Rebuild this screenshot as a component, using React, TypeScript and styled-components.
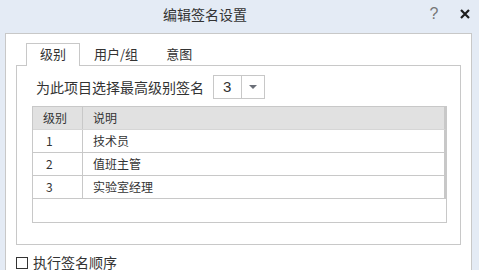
import styled, {createGlobalStyle} from "styled-components";

const GlobalStyle = createGlobalStyle`
    html, body {
        margin: 0;
        padding: 0;
        background: #e4ebf5;
    }
    body {
        font-family: "Noto Sans CJK SC", "Noto Sans", sans-serif;
        color: #333;
    }
`

type Row = {
    level: string
    desc: string
}

const rows: Row[] = [
    {level: "1", desc: "技术员"},
    {level: "2", desc: "值班主管"},
    {level: "3", desc: "实验室经理"},
]

const tabs = ["级别", "用户/组", "意图"]

export default function App() {
    return (
        <>
            <GlobalStyle/>
            <Window>
                <TitleBar>
                    <Title>编辑签名设置</Title>
                    <HelpButton>?</HelpButton>
                    <CloseButton>
                        <svg width="10" height="10" viewBox="0 0 10 10">
                            <path d="M1 1 L9 9 M9 1 L1 9" stroke="#1e1e1e" strokeWidth="2.2"/>
                        </svg>
                    </CloseButton>
                </TitleBar>
                <Body>
                    <TabBar>
                        {tabs.map((t, i) => (
                            <Tab key={t} $active={i === 0}>{t}</Tab>
                        ))}
                    </TabBar>
                    <TabPanel>
                        <LevelLine>
                            <Label>为此项目选择最高级别签名</Label>
                            <Combo>
                                <ComboValue>3</ComboValue>
                                <ComboArrow><Triangle/></ComboArrow>
                            </Combo>
                        </LevelLine>
                        <Table>
                            <HeaderRow>
                                <LevelCell $pad={10}>级别</LevelCell>
                                <DescCell>说明</DescCell>
                            </HeaderRow>
                            {rows.map(r => (
                                <DataRow key={r.level}>
                                    <LevelCell $pad={13}>{r.level}</LevelCell>
                                    <DescCell>{r.desc}</DescCell>
                                </DataRow>
                            ))}
                            <EmptyArea/>
                        </Table>
                    </TabPanel>
                    <CheckLine>
                        <CheckBox/>
                        <CheckText>执行签名顺序</CheckText>
                    </CheckLine>
                </Body>
            </Window>
        </>
    );
}

const Window = styled.div`
    width: 479px;
    height: 270px;
    overflow: hidden;
    background: #e4ebf5;
    display: flex;
    flex-direction: column;
`

const TitleBar = styled.div`
    height: 33px;
    display: flex;
    align-items: center;
    padding-left: 163px;
    box-sizing: border-box;
`

const Title = styled.div`
    font-size: 14px;
    color: #333;
    flex: 1;
    line-height: 1;
    margin-top: -5px;
`

const HelpButton = styled.div`
    width: 16px;
    font-family: "Liberation Sans", sans-serif;
    font-size: 16px;
    color: #777;
    margin-top: -6px;
    margin-right: -3px;
    text-align: center;
`

const CloseButton = styled.div`
    width: 10px;
    height: 10px;
    margin: -6px 9px 0 21px;
    display: flex;
`

const Body = styled.div`
    flex: 1;
    margin: 0 7px 0 5px;
    background: #fff;
    border: 1px solid #c8c8c8;
    border-bottom: none;
    padding: 9px 10px 0 10px;
    display: flex;
    flex-direction: column;
`

const TabBar = styled.div`
    display: flex;
    padding-left: 10px;
    height: 22px;
`

const Tab = styled.div<{ $active: boolean }>`
    padding: 0 13px;
    font-size: 13px;
    line-height: 20px;
    border: 1px solid ${p => p.$active ? "#c8c8c8" : "transparent"};
    border-bottom: none;
    background: #fff;
    position: relative;
    z-index: 1;
    box-sizing: border-box;
    margin-bottom: ${p => p.$active ? "-1px" : "0"};
    height: ${p => p.$active ? "23px" : "22px"};
`

const TabPanel = styled.div`
    border: 1px solid #c8c8c8;
    padding: 9px 13px 21px 15px;
    display: flex;
    flex-direction: column;
`

const LevelLine = styled.div`
    display: flex;
    align-items: center;
    padding-left: 4px;
`

const Label = styled.div`
    font-size: 14px;
    margin-right: 9px;
`

const Combo = styled.div`
    display: flex;
    width: 52px;
    height: 24px;
    border: 1px solid #c8c8c8;
    box-sizing: border-box;
`

const ComboValue = styled.div`
    width: 28px;
    border-right: 1px solid #c8c8c8;
    font-family: "Liberation Sans", sans-serif;
    font-size: 15px;
    line-height: 21px;
    padding-left: 9px;
    box-sizing: border-box;
`

const ComboArrow = styled.div`
    flex: 1;
    display: flex;
    align-items: center;
    justify-content: center;
`

const Triangle = styled.div`
    width: 0;
    height: 0;
    border-left: 4px solid transparent;
    border-right: 4px solid transparent;
    border-top: 4px solid #6b6f78;
`

const Table = styled.div`
    margin-top: 7px;
    border: 1px solid #c8c8c8;
    display: flex;
    flex-direction: column;
`

const HeaderRow = styled.div`
    display: flex;
    height: 22px;
    background: #e1e1e1;
    border-bottom: 1px solid #d6d6d6;
    border-right: 2px solid #c8c8c8;
    font-size: 12px;
`

const DataRow = styled.div`
    display: flex;
    height: 22px;
    border-bottom: 1px solid #c8c8c8;
    border-right: 2px solid #c8c8c8;
    font-size: 12px;
`

const LevelCell = styled.div<{ $pad: number }>`
    width: 50px;
    border-right: 1px solid #c8c8c8;
    padding-left: ${p => p.$pad}px;
    box-sizing: border-box;
    line-height: 22px;
`

const DescCell = styled.div`
    flex: 1;
    padding-left: 10px;
    line-height: 22px;
`

const EmptyArea = styled.div`
    height: 23px;
`

const CheckLine = styled.div`
    display: flex;
    align-items: center;
    margin-top: 11px;
`

const CheckBox = styled.div`
    width: 12px;
    height: 12px;
    border: 1px solid #333;
    box-sizing: border-box;
    margin-right: 5px;
`

const CheckText = styled.div`
    font-size: 14px;
    line-height: 13px;
`
